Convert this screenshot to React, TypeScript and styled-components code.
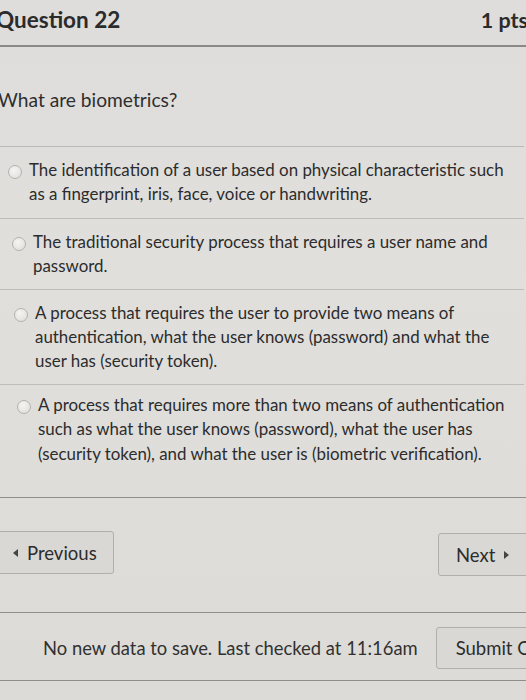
import React from "react";
import styled, { createGlobalStyle } from "styled-components";

const Global = createGlobalStyle`
  html, body { margin: 0; padding: 0; }
  body {
    background: #dddcd9;
    font-family: Lato, "Open Sans", sans-serif;
    color: #333;
    overflow: hidden;
  }
`;

const Page = styled.div`
  width: 526px;
  height: 700px;
  overflow: hidden;
  background: linear-gradient(180deg, #dedddb 0%, #e0dfdc 40%, #dcdbd7 100%);
`;

const Inner = styled.div`
  width: 545px;
  margin-left: -4px;
`;

const Header = styled.div`
  display: flex;
  justify-content: space-between;
  align-items: baseline;
  height: 47px;
  box-sizing: border-box;
  padding: 3px 13px 0 0;
  border-bottom: 2px solid #8a8986;
`;

const Title = styled.h2`
  margin: 0;
  font-size: 22.5px;
  font-weight: 700;
  color: #2b2b2b;
  line-height: 34px;
`;

const Points = styled.span`
  font-size: 21.5px;
  font-weight: 700;
  color: #2b2b2b;
`;

const QuestionText = styled.p`
  margin: 0;
  padding: 41px 0 34px 2px;
  font-size: 19.2px;
  line-height: 24px;
  color: #2e2e2e;
  border-bottom: 1px solid #b9b8b4;
  width: 526px;
`;

const Options = styled.div`
  width: 528px;
`;

const Option = styled.label<{ $indent: number; $padT: number; $padB: number; $last?: boolean }>`
  display: flex;
  align-items: flex-start;
  gap: 7px;
  padding: ${(p) => p.$padT}px 0 ${(p) => p.$padB}px ${(p) => p.$indent}px;
  border-bottom: ${(p) => (p.$last ? "none" : "1px solid #bebdb9")};
  font-size: 16.9px;
  line-height: 24.4px;
  color: #2c2c2c;
`;

const OptionText = styled.span`
  white-space: nowrap;
`;

const Radio = styled.span`
  flex: none;
  width: 12px;
  height: 12px;
  border-radius: 50%;
  border: 1px solid #b3b2ae;
  background: radial-gradient(circle at 40% 35%, #f4f4f2, #dddcd9);
  margin-top: 7px;
`;

const Nav = styled.div`
  border-top: 1px solid #8f8e8b;
  margin-top: 22px;
  display: flex;
  justify-content: space-between;
  align-items: flex-start;
  padding: 33px 0 36px 0;
  border-bottom: 1px solid #8f8e8b;
  width: 532px;
`;

const Button = styled.button<{ $offset?: number; $padL?: number; $padR?: number; $width?: number }>`
  font-family: Lato, sans-serif;
  font-size: 18.5px;
  color: #2c2c2c;
  background: #d9d8d5;
  border: 1px solid #b0afab;
  border-radius: 3px;
  height: 43px;
  ${(p) => (p.$width ? `width: ${p.$width}px;` : "")}
  padding: 0 ${(p) => p.$padR ?? 14}px 0 ${(p) => p.$padL ?? 14}px;
  display: flex;
  align-items: center;
  gap: 9px;
  white-space: nowrap;
  margin-top: ${(p) => p.$offset ?? 0}px;
`;

const Tri = styled.span<{ $dir: "left" | "right" }>`
  display: inline-block;
  width: 0;
  height: 0;
  border-top: 4px solid transparent;
  border-bottom: 4px solid transparent;
  ${(p) =>
    p.$dir === "left"
      ? "border-right: 5px solid #444;"
      : "border-left: 5px solid #444;"}
`;

const Footer = styled.div`
  display: flex;
  align-items: center;
  gap: 18px;
  padding: 14px 0 11px 47px;
  border-bottom: 1px solid #8f8e8b;
  width: 560px;
`;

const Status = styled.span`
  font-size: 18.4px;
  color: #313131;
  white-space: nowrap;
`;

const SubmitButton = styled(Button)`
  width: 125px;
  height: 42px;
  justify-content: flex-start;
  padding-left: 19px;
`;

const options = [
  {
    indent: 12,
    padT: 11,
    padB: 11,
    lines: [
      "The identification of a user based on physical characteristic such",
      "as a fingerprint, iris, face, voice or handwriting.",
    ],
  },
  {
    indent: 16,
    padT: 11,
    padB: 10,
    lines: ["The traditional security process that requires a user name and", "password."],
  },
  {
    indent: 18,
    padT: 11,
    padB: 10,
    lines: [
      "A process that requires the user to provide two means of",
      "authentication, what the user knows (password) and what the",
      "user has (security token).",
    ],
  },
  {
    indent: 21,
    padT: 8,
    padB: 9,
    lines: [
      "A process that requires more than two means of authentication",
      "such as what the user knows (password), what the user has",
      "(security token), and what the user is (biometric verification).",
    ],
  },
];

export default function App() {
  return (
    <Page>
      <Global />
      <Inner>
        <Header>
          <Title>Question 22</Title>
          <Points>1 pts</Points>
        </Header>
        <QuestionText>What are biometrics?</QuestionText>
        <Options>
          {options.map((o, i) => (
            <Option
              key={i}
              $indent={o.indent}
              $padT={o.padT}
              $padB={o.padB}
              $last={i === options.length - 1}
            >
              <Radio />
              <OptionText>
                {o.lines.map((l, j) => (
                  <React.Fragment key={j}>
                    {j > 0 && <br />}
                    {l}
                  </React.Fragment>
                ))}
              </OptionText>
            </Option>
          ))}
        </Options>
        <Nav>
          <Button $padL={16} $padR={16}>
            <Tri $dir="left" />
            Previous
          </Button>
          <Button $offset={2} $padL={17} $width={90}>
            Next
            <Tri $dir="right" />
          </Button>
        </Nav>
        <Footer>
          <Status>No new data to save. Last checked at 11:16am</Status>
          <SubmitButton>Submit Quiz</SubmitButton>
        </Footer>
      </Inner>
    </Page>
  );
}
